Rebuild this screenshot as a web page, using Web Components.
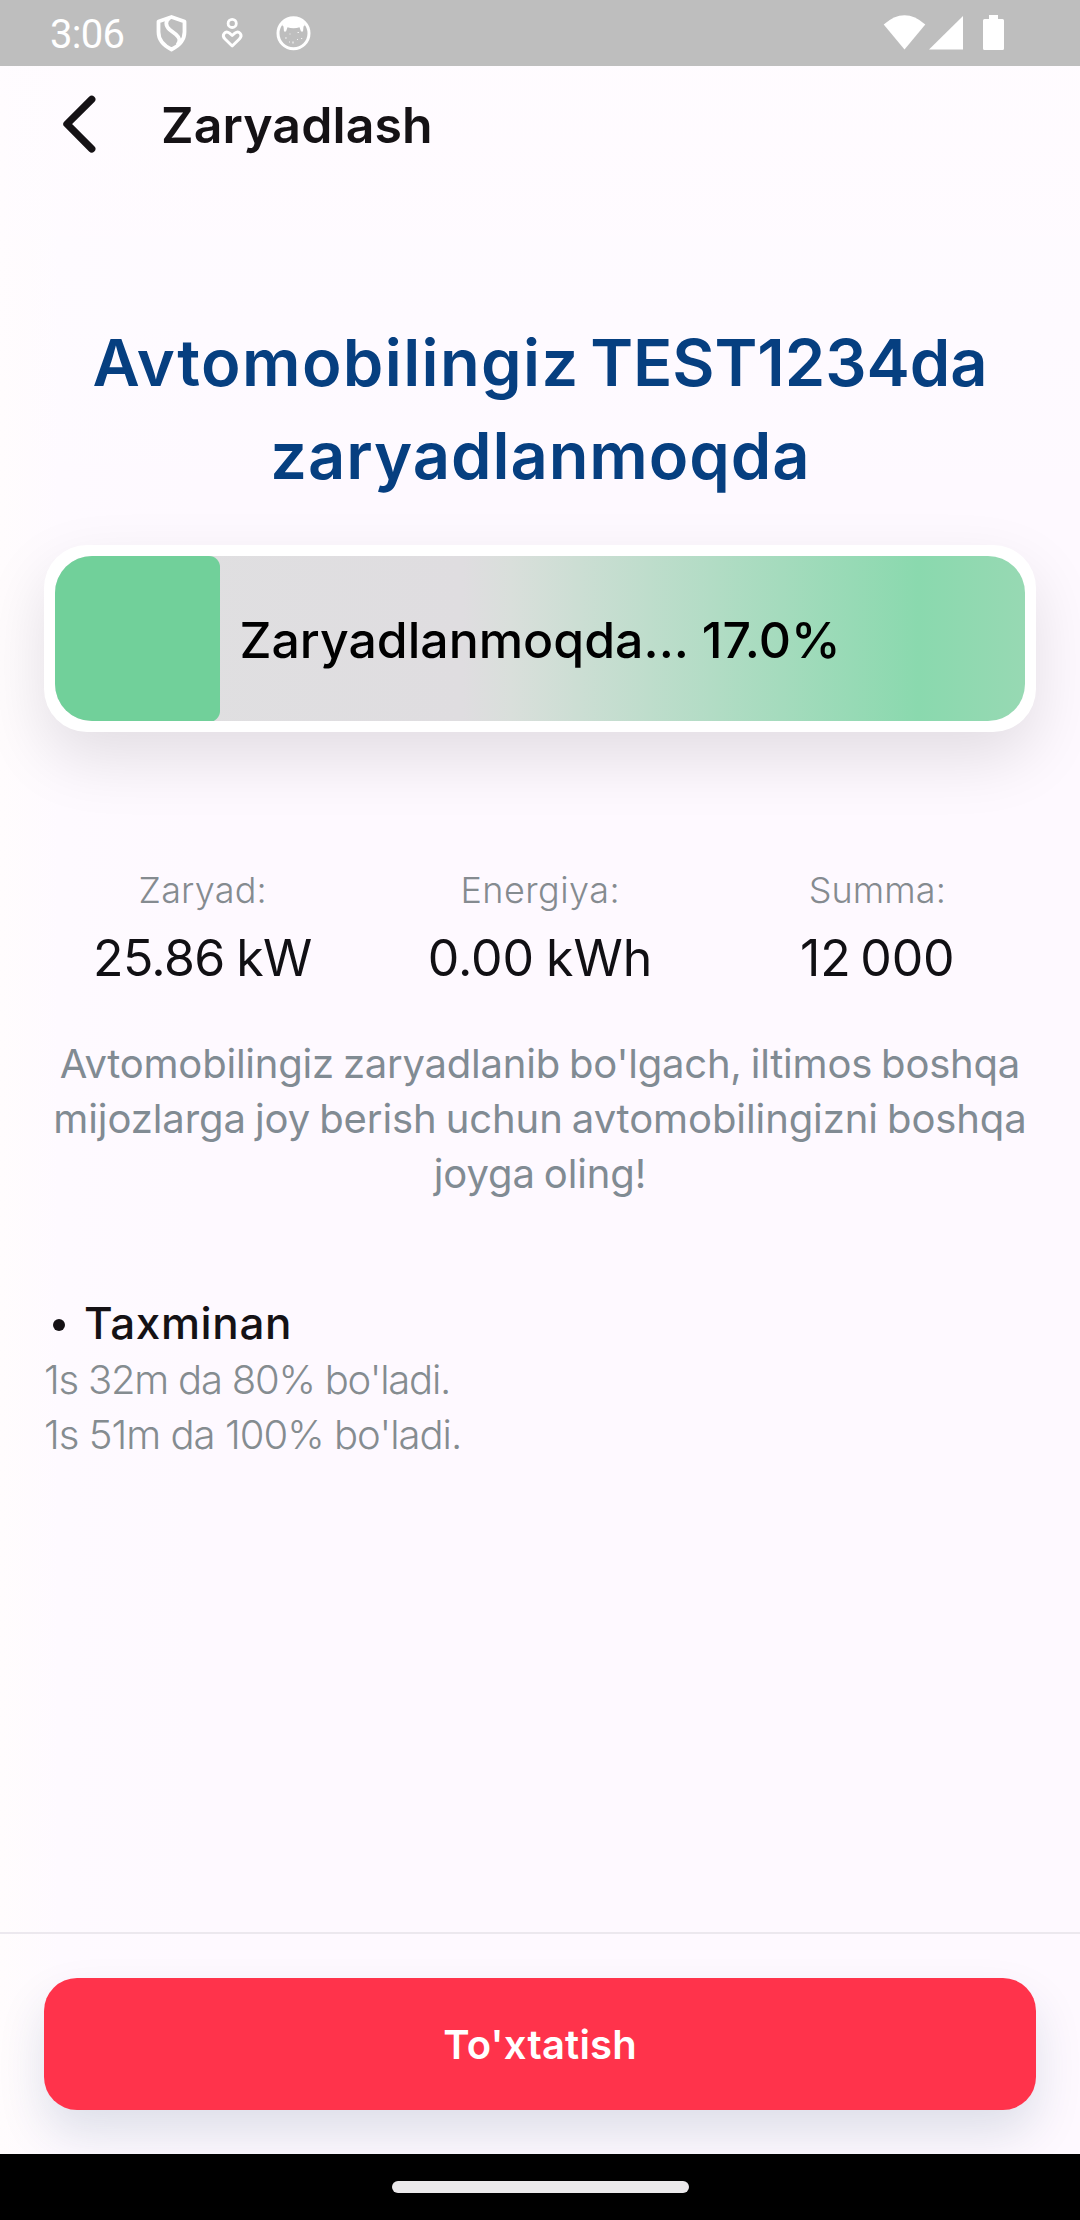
<!DOCTYPE html>
<html lang="uz">
<head>
<meta charset="utf-8">
<title>Zaryadlash</title>
<style>
html,body{margin:0;padding:0}
body{font-family:Inter,"Noto Sans",sans-serif;color:#151215}
</style>
</head>
<body>
<charging-screen></charging-screen>
<script>
const define = (name, html, ready) => customElements.define(name, class extends HTMLElement {
  connectedCallback() {
    if (this.shadowRoot) return;
    const t = document.createElement('template');
    t.innerHTML = html;
    this.attachShadow({mode: 'open'}).append(t.content.cloneNode(true));
    if (ready) ready(this);
  }
});

/* One line of text, tracked so that its ink spans the "ink" width in pixels.
   "space" narrows each word space by that many pixels. */
define('tracked-line', `<style>:host{display:block;width:max-content;white-space:pre}:host([inline]){display:inline-block}</style><slot></slot>`, el => {
  const cs = getComputedStyle(el), text = el.textContent, ctx = document.createElement('canvas').getContext('2d');
  ctx.font = `${cs.fontWeight} ${cs.fontSize} ${cs.fontFamily}`;
  const m = ctx.measureText(text);
  const ws = -(+el.getAttribute('space') || 0);
  const spaces = text.split(' ').length - 1;
  const ls = (+el.getAttribute('ink') - ws * spaces - (m.actualBoundingBoxRight + m.actualBoundingBoxLeft)) / (text.length - 1);
  el.style.letterSpacing = ls.toFixed(3) + 'px';
  el.style.wordSpacing = ws + 'px';
  el.style.marginRight = (-ls).toFixed(3) + 'px';
  el.style.marginLeft = el.hasAttribute('flush') ? m.actualBoundingBoxLeft.toFixed(2) + 'px' : '';
});

define('status-bar', `<style>
:host{display:flex;height:66px;background:#bebebe;color:#fff;align-items:center;justify-content:space-between;padding:0 71px 0 50px;box-sizing:border-box}
.l{display:flex;align-items:center;font:400 40px/66px Roboto,sans-serif}
.t{width:100px;padding-top:3px;letter-spacing:-.7px}svg{display:block}
</style>
<div class="l"><span class="t">3:06</span>
<svg width="170" height="66" viewBox="150 0 170 66" fill="none" stroke="#fff">
<path d="M171.500 17 184.500 21.500V32C184.500 40.500 179.500 45.500 171.500 49.500 163.500 45.500 158.500 40.500 158.500 32V21.500Z" stroke-width="3.800" stroke-linejoin="round"/>
<path d="M169.500 18C165 21 165.500 26 169.500 29.500L176 34.500C180 38 180.500 41 177.500 45" stroke-width="3.800"/>
<circle cx="232.200" cy="23.400" r="4.100" stroke-width="2.800"/>
<path d="M232.200 46 225 39C221 35 225.500 30 229.500 33.200L232.200 35.500 234.900 33.200C238.900 30 243.400 35 239.400 39Z" stroke-width="2.900" stroke-linejoin="round"/>
<circle cx="293.500" cy="33.300" r="15.500" stroke-width="3"/>
<path d="M282 25C285 20 289 18 293.500 18S302 20 305 25L303.500 26.500 303 31.500H301L299.500 27.300C296 28.500 291 28.500 287.500 27.300L286 31.500H284L283.500 26.500Z" fill="#fff" stroke="none"/>
<path d="M285 38h1.800M289.500 34h1M297.500 32.500h1.500M301 38.500h1.200M293 41.500v2M289 42h1M297 39.500h1" stroke-width="1.200" opacity=".8"/>
</svg></div>
<svg width="126" height="66" viewBox="882 0 126 66" fill="#fff">
<path d="M882.700 24.500Q903.500 6 924.300 24.500L903.500 49.500Z"/><path d="M928 49.500 962 16V49.500Z"/>
<path d="M988 15h9v4h4.500q1.500 0 1.500 1.500v28q0 1.500-1.500 1.500h-18q-1.500 0-1.500-1.500v-28q0-1.500 1.500-1.500h4.500z"/></svg>`);

define('app-header', `<style>
:host{display:flex;height:118px;padding-left:60px;align-items:center;font-weight:600;font-size:50px;line-height:118px}
svg{width:101px;height:118px;flex:none}
</style><svg viewBox="60 66 101 118"><path d="M91.700 99.300 67 124 91.700 148.800" fill="none" stroke="#151215" stroke-width="7.400" stroke-linecap="round" stroke-linejoin="round"/></svg><slot></slot>`);

define('charge-bar', `<style>
:host{display:block;margin:43px 44px 0;box-sizing:border-box;height:187px;padding:11px;border-radius:43px;background:#fff;box-shadow:0 26px 64px rgba(0,0,0,.115)}
.track{height:164.500px;border-radius:37px;overflow:hidden;display:grid;background:linear-gradient(90deg,#e0e0e1 0,#dfdde0 42%,#d9dfdb 47%,#8ad9ae 89%,#97d9b3 100%)}
.fill,.label{grid-area:1/1}
.fill{width:var(--level);background:#71d09a;border-radius:0 11px 11px 0}
.label{display:flex;justify-content:center;font-size:50px;font-weight:500;color:#000;line-height:164px;padding:2px 0 0 0}
</style><div class="track"><div class="fill"></div><div class="label"><slot></slot></div></div>`);

define('charge-stat', `<style>
:host{display:flex;flex-direction:column;align-items:center}
.k{font-size:36px;line-height:50px;font-weight:300;color:#858b90;margin-bottom:8px}
.v{font-size:50px;line-height:70px;font-weight:400;color:#111014}
</style><div class="k"><slot name="label"></slot></div><div class="v"><slot></slot></div>`);

define('time-estimate', `<style>
:host{display:block;padding:94px 46px 0}
.h{display:flex;align-items:center;font-size:44px;line-height:56px;font-weight:500;margin-bottom:1px}
.dot{width:12px;height:12px;border-radius:50%;background:#151215;margin:4px 19px 0 7px}
.b{font-size:40px;line-height:55px;font-weight:330;color:#858c90}
</style><div class="h"><span class="dot"></span><slot name="title"></slot></div><div class="b"><slot></slot></div>`);

define('stop-button', `<style>
:host{display:block;border-top:2px solid #ece8ee;padding:44px 44px 44px;overflow:hidden}
button{display:flex;width:100%;height:132px;border:0;padding:1px 0 0;border-radius:33px;background:#ff334b;color:#fff;justify-content:center;align-items:center;font:600 40px/131px Inter,sans-serif;box-shadow:0 24px 48px rgba(10,55,85,.13)}
</style><button><slot></slot></button>`);

define('gesture-bar', `<style>
:host{display:flex;height:66px;background:#000;justify-content:center}
i{width:297px;height:12px;border-radius:6px;background:#ebe9eb;margin-top:27px}
</style><i></i>`);

define('charging-screen', `<style>
:host{display:flex;flex-direction:column;width:1080px;height:2220px;overflow:hidden;background:linear-gradient(180deg,rgba(255,252,255,.8) 66px,rgba(255,252,255,0) 520px),linear-gradient(90deg,#fffcfd 0,#fefaff 60px,#fef9ff 200px)}
h1{margin:132px 0 0;font-size:65px;line-height:93px;font-weight:600;color:#063f80;display:flex;flex-direction:column;align-items:center}
.row{white-space:nowrap;word-spacing:-4.5px}
.stats{display:grid;grid-template-columns:1fr 1fr 1fr;margin:133px 34px 0 34px}
.note{margin:43px 0 0;font-size:40px;line-height:55px;color:#818b93;display:flex;flex-direction:column;align-items:center}
.gap{flex:1}
</style>
<status-bar></status-bar>
<app-header><tracked-line ink="267">Zaryadlash</tracked-line></app-header>
<h1><span class="row"><tracked-line inline ink="481">Avtomobilingiz</tracked-line> <tracked-line inline ink="391">TEST1234da</tracked-line></span><tracked-line ink="532">zaryadlanmoqda</tracked-line></h1>
<charge-bar style="--level:165px"><tracked-line ink="595">Zaryadlanmoqda... 17.0%</tracked-line></charge-bar>
<div class="stats">
<charge-stat><tracked-line slot="label" ink="123">Zaryad:</tracked-line><tracked-line space="2" ink="215">25.86 kW</tracked-line></charge-stat>
<charge-stat><tracked-line slot="label" ink="153">Energiya:</tracked-line><tracked-line space="2" ink="219">0.00 kWh</tracked-line></charge-stat>
<charge-stat><tracked-line slot="label" ink="132">Summa:</tracked-line><tracked-line space="4" ink="150">12 000</tracked-line></charge-stat>
</div>
<p class="note"><tracked-line space="2" ink="957">Avtomobilingiz zaryadlanib bo'lgach, iltimos boshqa</tracked-line><tracked-line space="2" ink="968">mijozlarga joy berish uchun avtomobilingizni boshqa</tracked-line><tracked-line space="2" ink="211">joyga oling!</tracked-line></p>
<time-estimate><tracked-line slot="title" ink="204">Taxminan</tracked-line><tracked-line flush ink="402">1s 32m da 80% bo'ladi.</tracked-line><tracked-line flush ink="413">1s 51m da 100% bo'ladi.</tracked-line></time-estimate>
<div class="gap"></div>
<stop-button><tracked-line ink="190">To'xtatish</tracked-line></stop-button>
<gesture-bar></gesture-bar>`);
</script>
</body>
</html>
